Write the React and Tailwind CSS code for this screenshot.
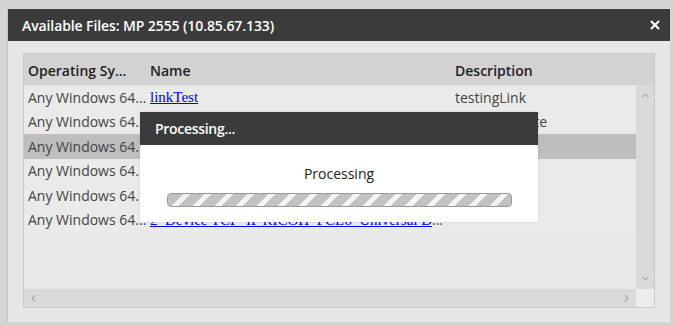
import { ChevronUp, ChevronDown, ChevronLeft, ChevronRight, X } from "lucide-react";

const rows = [
  { os: "Any Windows 64...", name: "linkTest", desc: "testingLink" },
  { os: "Any Windows 64...", name: "driverPackage", desc: "testingUpdate" },
  { os: "Any Windows 64...", name: "printerDriver", desc: "", selected: true },
  { os: "Any Windows 64...", name: "scanUtility", desc: "" },
  { os: "Any Windows 64...", name: "faxDriver", desc: "" },
  {
    os: "Any Windows 64...",
    name: "2_Device TCP_IP RICOH_PCL6_Universal Driver V4.22",
    desc: "",
  },
];

const ui = { fontFamily: '"Open Sans", "Noto Sans", sans-serif' };

const App = () => {
  return (
    <div
      className="w-[674px] h-[326px] bg-[#d4d4d4] pt-[9px] pl-[7px] pr-[4px] pb-[4px] flex"
      style={ui}
    >
      <div className="relative flex-1 flex flex-col bg-[#e6e6e6] border-l border-[#c4c4c4]">
        <div className="h-[32px] bg-[#3b3b3b] flex items-center justify-between pl-[14px] pr-[8px] shrink-0">
          <span className="text-white text-[14px] font-semibold tracking-[-0.1px]">
            Available Files: MP 2555 (10.85.67.133)
          </span>
          <X className="w-[14px] h-[14px] text-white" strokeWidth={3.5} />
        </div>

        <div className="flex-1 pt-[12px] px-[15px] pb-[14px] flex">
          <div className="flex-1 border border-[#c9c9c9] flex flex-col bg-[#e8e8e8]">
            <div className="h-[31px] bg-[#d2d2d2] flex items-end pb-[4px] text-[14px] font-semibold text-[#222] shrink-0">
              <div className="w-[122px] pl-[4px] whitespace-nowrap">Operating Sy...</div>
              <div className="w-[304px] pl-[4px]">Name</div>
              <div className="pl-[5px]">Description</div>
            </div>

            <div className="flex-1 flex">
              <div className="flex-1 flex flex-col">
                {rows.map((r, i) => (
                  <div
                    key={i}
                    className={`h-[24.5px] flex items-center text-[14px] text-[#444] ${
                      r.selected ? "bg-[#bebebe]" : "bg-[#eaeaea]"
                    }`}
                  >
                    <div className="w-[122px] pl-[4px] whitespace-nowrap">{r.os}</div>
                    <div className="w-[304px] pl-[4px] pr-[4px] truncate text-[#555]">
                      <a
                        href="#"
                        className="text-[#0000ee] underline text-[15px]"
                        style={{ fontFamily: '"Liberation Serif", serif' }}
                      >
                        {r.name}
                      </a>
                    </div>
                    <div className="pl-[5px] whitespace-nowrap">{r.desc}</div>
                  </div>
                ))}
              </div>
              <div className="w-[18px] bg-[#dadada] flex flex-col items-center justify-between py-[5px]">
                <ChevronUp className="w-[11px] h-[11px] text-[#a8a8a8]" strokeWidth={2.5} />
                <ChevronDown className="w-[11px] h-[11px] text-[#a8a8a8]" strokeWidth={2.5} />
              </div>
            </div>

            <div className="h-[18px] flex shrink-0">
              <div className="flex-1 bg-[#dadada] flex items-center justify-between px-[4px]">
                <ChevronLeft className="w-[11px] h-[11px] text-[#a8a8a8]" strokeWidth={2.5} />
                <ChevronRight className="w-[11px] h-[11px] text-[#a8a8a8]" strokeWidth={2.5} />
              </div>
              <div className="w-[18px] bg-[#ececec]" />
            </div>
          </div>
        </div>

        <div className="absolute left-[132px] top-[103px] w-[398px] h-[110px] flex flex-col shadow-[0_0_2px_rgba(0,0,0,0.15)]">
          <div className="h-[33px] bg-[#3b3b3b] flex items-center pl-[15px]">
            <span className="text-white text-[14px] font-semibold tracking-[-0.3px]">Processing...</span>
          </div>
          <div className="flex-1 bg-white flex flex-col items-center pt-[18px]">
            <span className="text-[14px] text-[#222]">Processing</span>
            <div className="mt-[9px] w-[345px] h-[14px] rounded-[4px] border border-[#9a9a9a] bg-[repeating-linear-gradient(-45deg,#c2c2c2_0_10px,#f4f4f4_10px_15px)]" />
          </div>
        </div>
      </div>
    </div>
  );
};

export default App;
